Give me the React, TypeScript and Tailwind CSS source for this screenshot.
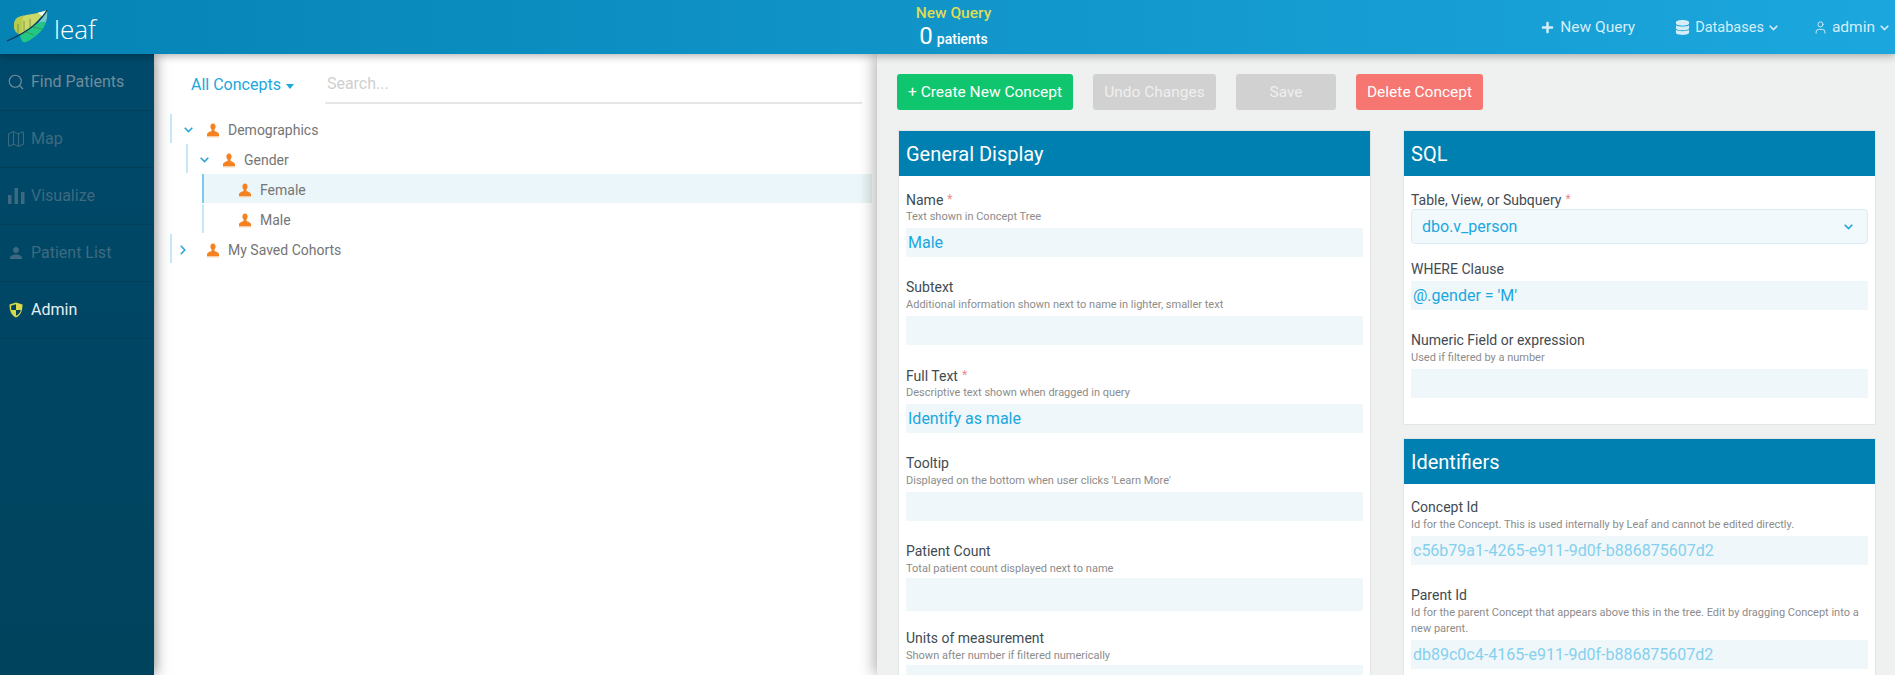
import { Map as MapIcon, Search, User } from "lucide-react";
import { FaDatabase, FaPlus } from "react-icons/fa";
import { MdPerson } from "react-icons/md";

const font = "font-['Roboto','Liberation_Sans',sans-serif]";

function Leaf() {
  return (
    <svg width="42" height="34" viewBox="6 9 42 34" className="mb-[2px] shrink-0">
      <path d="M14 26 C14 21 16 18 19 17 C27 14 38 14 47 10 L33 26 L20 35 C16 33 14 30 14 26Z" fill="#cbd968" />
      <path d="M14 26 C14 21 16 18 19 17 C21 16 23 16 24 15.5 C22 20 22 25 22 32 L20 35 C16 33 14 30 14 26Z" fill="#b6cb4c" />
      <path d="M38 12.5 C42 12 45 11 47 10 L43 17Z" fill="#f0f5ef" />
      <path d="M43 17 L47 10 C47.5 15 47 19 46 22 L38 23Z" fill="#74c9c6" />
      <path d="M20 35 L33 26 L38 23 L46 22 C44 29 39 34 33 38 C29 41 25 43 23 42 C21 40 20 37 20 35Z" fill="#22c784" />
      <path d="M7 41 C16 37 26 32 33 26 C39 21 44 16 47 10" stroke="#0b3a58" strokeWidth="1.3" fill="none" />
      <path d="M18 34 L18 24 M24 31 L24 21 M30 27 L30 19 M26 32 L34 35 M33 27 L42 29" stroke="#54803f" strokeWidth="0.7" fill="none" />
    </svg>
  );
}

function Bars() {
  return (
    <svg width="17" height="16" viewBox="0 0 17 16" fill="currentColor">
      <rect x="0" y="7" width="3.5" height="9" />
      <rect x="6.5" y="0" width="3.5" height="16" />
      <rect x="13" y="4" width="3.5" height="12" />
    </svg>
  );
}

function Shield() {
  return (
    <svg width="14" height="16" viewBox="0 0 14 16">
      <path d="M7 0.5 L13.5 2.5 C13.5 9 11.5 13.5 7 15.5 C2.5 13.5 0.5 9 0.5 2.5Z" fill="#d8d94a" />
      <path d="M7 2.2 L7 8 L2.3 8 C2.1 6.6 2.1 5 2.1 3.7 Z M7 8 L11.8 8 C11.3 10.8 9.6 12.5 7 13.7Z" fill="#00435d" />
    </svg>
  );
}

function Person() {
  return (
    <svg width="12" height="15" viewBox="0 0 12 15" className="shrink-0">
      <path d="M6 0.5 C7.8 0.5 8.6 2 8.6 3.6 C8.6 5 8 6 7.4 6.6 L7.4 8 C9.5 8.7 11.5 9.6 12 11 L12 13.5 L0 13.5 L0 11 C0.5 9.6 2.5 8.7 4.6 8 L4.6 6.6 C4 6 3.4 5 3.4 3.6 C3.4 2 4.2 0.5 6 0.5Z" fill="#f58220" />
      <rect x="0" y="13.5" width="12" height="1" fill="#f3dcc6" />
    </svg>
  );
}

function Chev({ className }: { className?: string }) {
  return (
    <svg width="9" height="6" viewBox="0 0 9 6" className={className} fill="none" stroke="currentColor" strokeWidth="1.6">
      <path d="M0.7 0.8 L4.5 4.6 L8.3 0.8" />
    </svg>
  );
}

function ChevRight({ className }: { className?: string }) {
  return (
    <svg width="6" height="10" viewBox="0 0 6 10" className={className} fill="none" stroke="currentColor" strokeWidth="1.6">
      <path d="M0.8 0.8 L4.8 5 L0.8 9.2" />
    </svg>
  );
}

function SideItem({ icon, label, tone }: { icon: React.ReactNode; label: string; tone: string }) {
  return (
    <div className={`flex h-[57px] items-center border-b border-[#003f57] ${tone}`}>
      <div className="flex w-[31px] shrink-0 justify-center pl-[1px]">{icon}</div>
      <span className="text-[16px]">{label}</span>
    </div>
  );
}

function TreeRow({ level, chevron, label, selected }: { level: number; chevron?: "down" | "right"; label: string; selected?: boolean }) {
  const offset = ["ml-[16px]", "ml-[32px]", "ml-[48px]"][level];
  return (
    <div
      className={`mb-[1px] flex h-[29px] items-center border-l-2 pt-[3px] ${offset} ${selected ? "border-[#7cc9e8] bg-[#ebf6fb]" : "border-[#c5e8f4]"}`}
    >
      <div className="flex w-[21px] shrink-0 items-center text-[#2ba6d8]">
        {chevron === "down" && <Chev className="ml-[12px]" />}
        {chevron === "right" && <ChevRight className="ml-[8px]" />}
      </div>
      <div className="ml-[14px]">
        <Person />
      </div>
      <span className="ml-[9px] text-[14px] text-[#757575]">{label}</span>
      {selected && <div className="-mt-[3px] ml-auto h-[29px] w-[10px] bg-[#e9f3f3]" />}
    </div>
  );
}

function Req() {
  return <span className="ml-[4px] align-[2px] text-[12px] text-[#ee8a8a]">*</span>;
}

function Field({
  label,
  sub,
  value,
  required,
  disabled,
  tight,
}: {
  label: string;
  sub?: string;
  value?: string;
  required?: boolean;
  disabled?: boolean;
  tight?: boolean;
}) {
  return (
    <div className={tight ? "mb-[18px]" : "mb-[21px]"}>
      <div className="h-[18px] text-[14px] leading-[18px] text-[#414b52]">
        {label}
        {required && <Req />}
      </div>
      {sub && <div className={`mt-[1px] text-[11px] leading-[16px] text-[#8c8c8c] ${tight ? "mb-[1px]" : "mb-[3px]"}`}>{sub}</div>}
      {!sub && <div className="h-[3px]" />}
      <div
        className={`flex items-center bg-[#eff7fa] px-[2px] text-[16px] ${tight ? "h-[33px]" : "h-[29px]"} ${disabled ? "text-[#85d0ee]" : "text-[#1ba7df]"}`}
      >
        {value}
      </div>
    </div>
  );
}

function Card({ title, children }: { title: string; children: React.ReactNode }) {
  return (
    <div className="border border-[#e3e5e5] bg-white">
      <div className="flex h-[45px] items-center bg-[#0080b0] px-[7px] text-[20px] text-white">{title}</div>
      <div className="px-[7px] pt-[14px]">{children}</div>
    </div>
  );
}

function Btn({ label, tone, w }: { label: string; tone: string; w: string }) {
  return <div className={`flex h-[36px] items-center justify-center rounded-[3px] pt-[1px] text-[15.5px] ${tone} ${w}`}>{label}</div>;
}

export default function App() {
  return (
    <div className={`flex h-[675px] w-[1895px] flex-col overflow-hidden bg-white ${font}`}>
      <header className="relative z-30 flex h-[54px] shrink-0 items-center justify-between bg-linear-to-r from-[#0583b5] to-[#1ba7de] shadow-[0_2px_8px_rgba(0,0,0,0.3)]">
        <div className="flex w-[412px] items-center pl-[6px]">
          <Leaf />
          <span className="ml-[6px] pt-[3px] font-['Open_Sans',sans-serif] text-[26px] font-light leading-none text-white">leaf</span>
        </div>
        <div className="flex flex-col items-center pt-[3px]">
          <div className="text-[15.5px] font-medium leading-[17px] text-[#dcdc56]">New Query</div>
          <div className="flex items-baseline leading-[28px] text-white">
            <span className="text-[24px]">0</span>
            <span className="ml-[4px] text-[14px] font-medium">patients</span>
          </div>
        </div>
        <div className="flex w-[400px] items-center justify-end whitespace-nowrap pr-[6px] pt-[1px] text-[15.5px] text-[#d4edf9]">
          <FaPlus size={13} className="mr-[6px] shrink-0" />
          <span>New Query</span>
          <FaDatabase size={15} className="ml-[40px] mr-[5px] shrink-0" />
          <span className="text-[14.5px]">Databases</span>
          <Chev className="ml-[5px] shrink-0" />
          <User size={15} strokeWidth={1.5} className="ml-[35px] mr-[4px] shrink-0" />
          <span>admin</span>
          <Chev className="ml-[5px] shrink-0" />
        </div>
      </header>

      <div className="flex min-h-0 flex-1">
        <aside className="relative z-20 w-[154px] shrink-0 bg-linear-to-b from-[#00496a] to-[#00435d] shadow-[0_0_14px_rgba(0,0,0,0.55)]">
          <SideItem icon={<Search size={18} strokeWidth={1.5} />} label="Find Patients" tone="text-[#6f8d9c]" />
          <SideItem icon={<MapIcon size={20} strokeWidth={1.3} />} label="Map" tone="text-[#3d6a80]" />
          <SideItem icon={<Bars />} label="Visualize" tone="text-[#3d6a80]" />
          <SideItem icon={<MdPerson size={18} />} label="Patient List" tone="text-[#3d6a80]" />
          <SideItem icon={<Shield />} label="Admin" tone="text-[#e6eef2]" />
        </aside>

        <section className="w-[723px] shrink-0 pr-[5px]">
          <div className="flex h-[60px] items-start pt-[16px]">
            <div className="ml-[37px] flex items-center pt-[3px] text-[16px] leading-[24px] text-[#1ba7df]">
              All Concepts
              <span className="ml-[5px] mt-[2px] h-0 w-0 border-x-[4px] border-t-[5px] border-x-transparent border-t-[#1ba7df]" />
            </div>
            <div className="ml-[31px] h-[34px] w-[537px] border-b-2 border-[#e6e6e6] pl-[2px] text-[16px] leading-[28px] text-[#cfcfcf]">
              Search...
            </div>
          </div>
          <TreeRow level={0} chevron="down" label="Demographics" />
          <TreeRow level={1} chevron="down" label="Gender" />
          <TreeRow level={2} label="Female" selected />
          <TreeRow level={2} label="Male" />
          <TreeRow level={0} chevron="right" label="My Saved Cohorts" />
        </section>

        <main className="relative z-10 min-w-0 flex-1 overflow-hidden bg-[#eff1f1] pl-[20px] pr-[18px] pt-[20px] shadow-[-3px_0_14px_rgba(0,0,0,0.3)]">
          <div className="mb-[20px] flex gap-[20px] text-white">
            <Btn label="+ Create New Concept" tone="bg-[#0fc66e]" w="w-[176px]" />
            <Btn label="Undo Changes" tone="bg-[#d1d1d1] text-[#efefef]" w="w-[123px]" />
            <Btn label="Save" tone="bg-[#d1d1d1] text-[#efefef]" w="w-[100px]" />
            <Btn label="Delete Concept" tone="bg-[#f67672]" w="w-[127px]" />
          </div>
          <div className="ml-[1px] flex gap-[32px]">
            <div className="w-[473px] shrink-0">
              <Card title="General Display">
                <Field label="Name" required sub="Text shown in Concept Tree" value="Male" />
                <Field label="Subtext" sub="Additional information shown next to name in lighter, smaller text" />
                <Field label="Full Text" required sub="Descriptive text shown when dragged in query" value="Identify as male" />
                <Field label="Tooltip" sub="Displayed on the bottom when user clicks 'Learn More'" />
                <Field label="Patient Count" sub="Total patient count displayed next to name" tight />
                <Field label="Units of measurement" sub="Shown after number if filtered numerically" tight />
              </Card>
            </div>
            <div className="flex w-[473px] shrink-0 flex-col gap-[13px]">
              <Card title="SQL">
                <div className="mb-[16px]">
                  <div className="h-[18px] text-[14px] leading-[18px] text-[#414b52]">
                    Table, View, or Subquery
                    <Req />
                  </div>
                  <div className="mt-[1px] flex h-[35px] items-center justify-between rounded-[4px] border border-[#d8edf5] bg-[#f2f9fc] pl-[10px] pr-[14px] text-[16px] text-[#1ba7df]">
                    dbo.v_person
                    <Chev />
                  </div>
                </div>
                <Field label="WHERE Clause" value="@.gender = 'M'" />
                <div className="pb-[5px]">
                  <Field label="Numeric Field or expression" sub="Used if filtered by a number" />
                </div>
              </Card>
              <Card title="Identifiers">
                <Field
                  label="Concept Id"
                  sub="Id for the Concept. This is used internally by Leaf and cannot be edited directly."
                  value="c56b79a1-4265-e911-9d0f-b886875607d2"
                  disabled
                />
                <Field
                  label="Parent Id"
                  sub="Id for the parent Concept that appears above this in the tree. Edit by dragging Concept into a new parent."
                  value="db89c0c4-4165-e911-9d0f-b886875607d2"
                  disabled
                />
              </Card>
            </div>
          </div>
        </main>
      </div>
    </div>
  );
}
